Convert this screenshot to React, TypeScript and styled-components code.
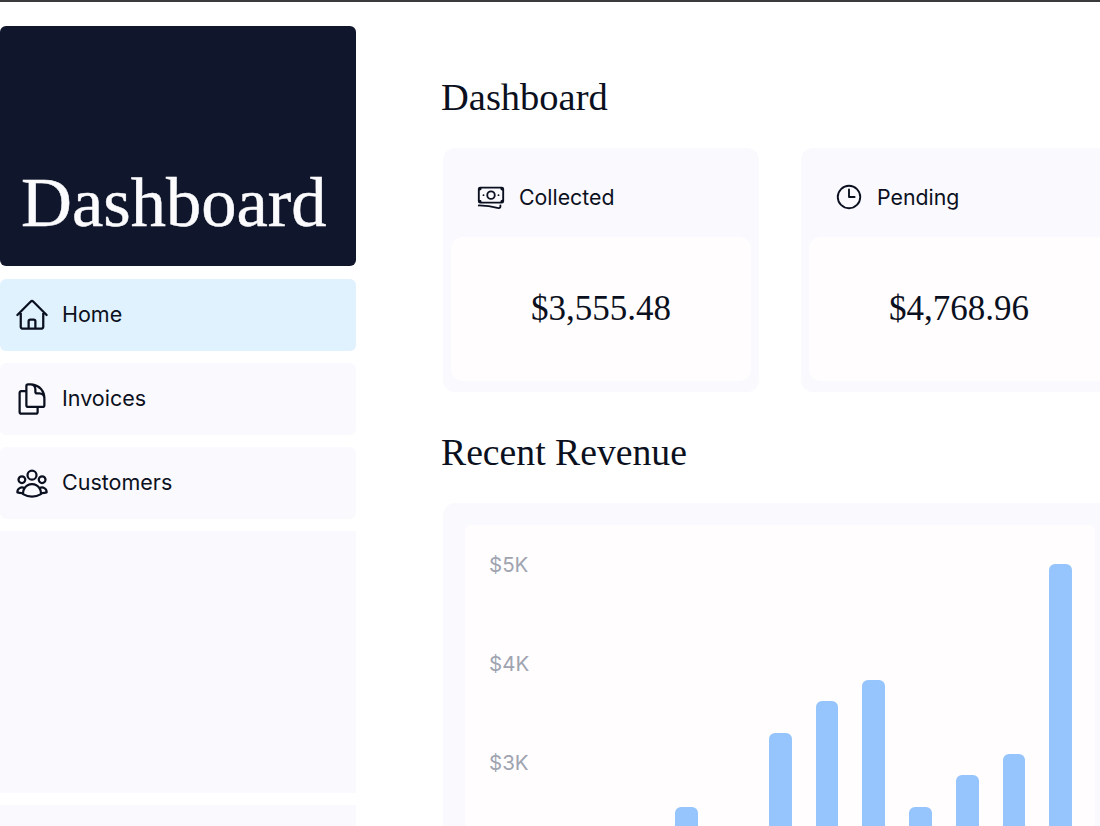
import React, { FC, ReactNode } from "react";
import styled, { createGlobalStyle } from "styled-components";
import {
  HiOutlineBanknotes,
  HiOutlineClock,
  HiOutlineDocumentDuplicate,
  HiOutlineHome,
  HiOutlineUserGroup,
} from "react-icons/hi2";

const inkColor = "#0b1020";
const panelColor = "#faf9fe";
const innerColor = "#fffdfe";

const revenue = [
  { month: "Jan", amount: 2000 },
  { month: "Feb", amount: 1800 },
  { month: "Mar", amount: 2200 },
  { month: "Apr", amount: 2500 },
  { month: "May", amount: 2300 },
  { month: "Jun", amount: 3200 },
  { month: "Jul", amount: 3500 },
  { month: "Aug", amount: 3700 },
  { month: "Sep", amount: 2500 },
  { month: "Oct", amount: 2800 },
  { month: "Nov", amount: 3000 },
  { month: "Dec", amount: 4800 },
];

const axisLabels = ["$5K", "$4K", "$3K"];

/** Height of one revenue unit in the chart */
const pixelsPerDollar = 0.1056;

const NavItem: FC<{ icon: ReactNode; label: string; active?: boolean }> = ({
  icon,
  label,
  active,
}) => (
  <NavRow $active={active}>
    {icon}
    <NavLabel>{label}</NavLabel>
  </NavRow>
);

const StatCard: FC<{ icon: ReactNode; title: string; value: string }> = ({
  icon,
  title,
  value,
}) => (
  <Card>
    <CardHead>
      {icon}
      <span>{title}</span>
    </CardHead>
    <CardValue>{value}</CardValue>
  </Card>
);

export default function App() {
  return (
    <>
      <GlobalStyle />
      <Page>
        <Sidebar>
          <Logo>Dashboard</Logo>
          <NavItem icon={<HiOutlineHome size={36} />} label="Home" active />
          <NavItem
            icon={<HiOutlineDocumentDuplicate size={36} />}
            label="Invoices"
          />
          <NavItem icon={<HiOutlineUserGroup size={36} />} label="Customers" />
          <Spacer />
          <NavFooter />
        </Sidebar>
        <Main>
          <Heading>Dashboard</Heading>
          <Cards>
            <StatCard
              icon={<HiOutlineBanknotes size={30} />}
              title="Collected"
              value="$3,555.48"
            />
            <StatCard
              icon={<HiOutlineClock size={30} />}
              title="Pending"
              value="$4,768.96"
            />
          </Cards>
          <SubHeading>Recent Revenue</SubHeading>
          <ChartCard>
            <ChartBody>
              <Axis>
                {axisLabels.map((label) => (
                  <AxisLabel key={label}>{label}</AxisLabel>
                ))}
              </Axis>
              <Bars>
                {revenue.map(({ month, amount }) => (
                  <Bar
                    key={month}
                    style={{ height: amount * pixelsPerDollar }}
                  />
                ))}
              </Bars>
            </ChartBody>
          </ChartCard>
        </Main>
      </Page>
    </>
  );
}

const GlobalStyle = createGlobalStyle`
  html, body {
    margin: 0;
    padding: 0;
    background: #fff;
  }
  body {
    font-family: Inter, "Liberation Sans", sans-serif;
    color: ${inkColor};
  }
`;

const Page = styled.div`
  display: flex;
  box-sizing: border-box;
  width: 1100px;
  height: 826px;
  overflow: hidden;
  border-top: 2px solid #3a3a3c;
`;

const Sidebar = styled.aside`
  flex: 356px 0 0;
  display: flex;
  flex-flow: nowrap column;
  gap: 12px;
  padding-top: 24px;
`;

const Logo = styled.div`
  flex: 240px 0 0;
  box-sizing: border-box;
  display: flex;
  align-items: flex-end;
  margin-bottom: 1px;
  padding: 0 0 24px 21px;
  border-radius: 6px;
  background: #10162b;
  color: #fbfbfd;
  font-family: "Liberation Serif", serif;
  font-size: 70.5px;
  line-height: 80px;
  -webkit-text-stroke: 0.5px #fbfbfd;
`;

const NavRow = styled.div<{ $active?: boolean }>`
  flex: 72px 0 0;
  display: flex;
  align-items: center;
  gap: 12px;
  box-sizing: border-box;
  padding-left: 14px;
  border-radius: 6px;
  background: ${({ $active }) => ($active ? "#e0f2fe" : panelColor)};
  font-size: 21.5px;
  font-weight: 400;
`;

const NavLabel = styled.span`
  padding-bottom: 2px;
`;

const Spacer = styled.div`
  flex: 262px 0 0;
  background: ${panelColor};
`;

const NavFooter = styled.div`
  flex: 72px 0 0;
  background: ${panelColor};
`;

const Main = styled.main`
  flex: auto 1 1;
  min-width: 0;
  padding: 72px 0 0 85px;
`;

const Heading = styled.h1`
  margin: 0 0 28px;
  font-family: "Liberation Serif", serif;
  font-size: 38.5px;
  font-weight: 400;
  line-height: 46px;
`;

const Cards = styled.div`
  display: flex;
  gap: 42px;
  margin-left: 2px;
`;

const Card = styled.div`
  flex: 316px 0 0;
  box-sizing: border-box;
  padding: 8px 8px 11px;
  border-radius: 12px;
  background: ${panelColor};
`;

const CardHead = styled.div`
  display: flex;
  align-items: center;
  gap: 13px;
  height: 81px;
  padding-left: 25px;
  font-size: 21.3px;
`;

const CardValue = styled.div`
  display: flex;
  align-items: center;
  justify-content: center;
  height: 144px;
  border-radius: 12px;
  background: ${innerColor};
  font-family: "Liberation Serif", serif;
  font-size: 35px;
`;

const SubHeading = styled.h2`
  margin: 37px 0 28px;
  font-family: "Liberation Serif", serif;
  font-size: 37.7px;
  font-weight: 400;
  line-height: 46px;
  white-space: nowrap;
`;

const ChartCard = styled.div`
  box-sizing: border-box;
  width: 674px;
  margin-left: 2px;
  padding: 22px;
  border-radius: 12px;
  background: ${panelColor};
`;

const ChartBody = styled.div`
  display: flex;
  align-items: flex-end;
  height: 519px;
  padding: 27px 23px 24px 24px;
  border-radius: 6px;
  background: ${innerColor};
`;

const Axis = styled.div`
  flex: 46px 0 0;
  align-self: flex-start;
  display: flex;
  flex-flow: nowrap column;
  gap: 75px;
  margin-top: 1px;
`;

const AxisLabel = styled.div`
  color: #a0a4b0;
  font-size: 20.5px;
  line-height: 24px;
`;

const Bars = styled.div`
  flex: auto 1 1;
  display: grid;
  grid-template-columns: repeat(12, 1fr);
  gap: 24px;
  align-items: end;
  height: 519px;
`;

const Bar = styled.div`
  border-radius: 6px 6px 0 0;
  background: #96c4fc;
`;
